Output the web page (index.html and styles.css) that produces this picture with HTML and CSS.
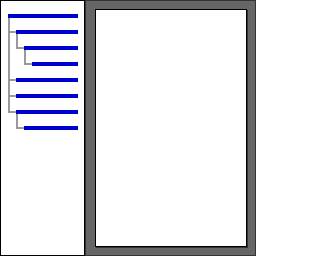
FILE: index.html
```html
<!DOCTYPE html>
<html>
<head>
<meta charset="utf-8">
<link rel="stylesheet" href="styles.css">
</head>
<body>
<div class="layout">
  <nav class="sidebar">
    <ul class="tree">
      <li>
        <div class="node"><span class="bar"></span></div>
        <ul class="children">
          <li>
            <div class="node"><span class="bar"></span></div>
            <ul class="children">
              <li>
                <div class="node"><span class="bar"></span></div>
                <ul class="children">
                  <li><div class="node"><span class="bar"></span></div></li>
                </ul>
              </li>
            </ul>
          </li>
          <li><div class="node"><span class="bar"></span></div></li>
          <li><div class="node"><span class="bar"></span></div></li>
          <li>
            <div class="node"><span class="bar"></span></div>
            <ul class="children">
              <li><div class="node"><span class="bar"></span></div></li>
            </ul>
          </li>
        </ul>
      </li>
    </ul>
  </nav>
  <main class="viewer">
    <div class="page"></div>
  </main>
</div>
</body>
</html>
```

FILE: styles.css
```css
html, body {
  margin: 0;
  padding: 0;
  background: #ffffff;
}

.layout {
  display: flex;
  width: 256px;
  height: 256px;
}

.sidebar {
  width: 85px;
  box-sizing: border-box;
  border: 1px solid #000000;
  background: #ffffff;
  padding: 7px 6px 0 7px;
}

.tree,
.children {
  list-style: none;
  margin: 0;
  padding: 0;
}

.node {
  height: 16px;
  display: flex;
  align-items: center;
}

.bar {
  flex: 1;
  height: 4px;
  background: #0000cc;
}

.children > li {
  position: relative;
  padding-left: 8px;
}

.children > li::before {
  content: "";
  position: absolute;
  left: 0;
  top: 0;
  width: 6px;
  height: 7px;
  border-left: 2px solid #999999;
  border-bottom: 2px solid #999999;
}

.children > li:first-child::before {
  top: -6px;
  height: 13px;
}

.children > li:not(:last-child)::after {
  content: "";
  position: absolute;
  left: 0;
  top: 0;
  bottom: 0;
  width: 2px;
  background: #999999;
}

.viewer {
  flex: 1;
  display: flex;
  box-sizing: border-box;
  background: #666666;
  border: 1px solid #333333;
  padding: 8px 8px 8px 9px;
}

.page {
  flex: 1;
  background: #ffffff;
  border: 1px solid #000000;
  box-shadow: 1px 1px 0 #333333;
}
```
